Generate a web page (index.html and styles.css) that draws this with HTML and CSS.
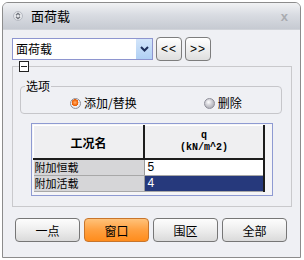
FILE: index.html
```html
<!DOCTYPE html>
<html>
<head>
<meta charset="utf-8">
<link rel="stylesheet" href="styles.css">
</head>
<body>
<div class="window">
  <div class="titlebar">
    <svg class="ticon" width="10" height="10" viewBox="0 0 10 10">
      <circle cx="5" cy="5" r="4.5" fill="#e4e6ea" stroke="#b4b8c0"/>
      <path d="M3 4.2 L5 2.4 L7 4.2 M3 5.8 L5 7.6 L7 5.8" fill="none" stroke="#6c7078" stroke-width="1.2"/>
    </svg>
    <span class="title">面荷载</span>
    <span class="close">x</span>
  </div>
  <div class="body">
    <div class="toprow">
      <div class="select">
        <span class="sel-text">面荷载</span>
        <span class="sel-btn">
          <svg width="9" height="6" viewBox="0 0 9 6"><path d="M1 1 L4.5 4.5 L8 1" fill="none" stroke="#1f2f5a" stroke-width="2"/></svg>
        </span>
      </div>
      <button class="nav">&lt;&lt;</button>
      <button class="nav">&gt;&gt;</button>
    </div>
    <fieldset class="outer">
      <legend class="collapse"><span class="minus"></span></legend>
      <fieldset class="options">
        <legend class="opt-label">选项</legend>
        <div class="radios">
          <label class="radio on"><span class="dot"></span>添加/替换</label>
          <label class="radio off"><span class="dot"></span>删除</label>
        </div>
      </fieldset>
      <div class="grid-wrap">
        <table class="grid">
          <tr class="head"><th class="c1">工况名</th><th class="c2"><span class="q">q<br>(kN/m^2)</span></th></tr>
          <tr><td class="name"><span class="cell">附加恒载</span></td><td class="val"><span class="cell">5</span></td></tr>
          <tr><td class="name"><span class="cell">附加活载</span></td><td class="val sel"><span class="cell">4</span></td></tr>
        </table>
      </div>
    </fieldset>
    <div class="actions">
      <button class="act">一点</button>
      <button class="act active">窗口</button>
      <button class="act">围区</button>
      <button class="act">全部</button>
    </div>
  </div>
</div>
</body>
</html>
```
FILE: styles.css
```css
html, body {
  margin: 0;
  padding: 0;
  background: #ffffff;
}
body {
  font-family: "Noto Sans CJK SC", "Liberation Sans", sans-serif;
  font-size: 12px;
  color: #000;
}
.window {
  margin: 2px 3px 2px 2px;
  height: 254px;
  border: 1px solid #8c8c8c;
  border-radius: 6px 6px 0 0;
  background: #eff0f4;
  display: flex;
  flex-direction: column;
  overflow: hidden;
}
.titlebar {
  height: 26px;
  flex: none;
  display: flex;
  align-items: center;
  padding: 0 0 0 10px;
  background: linear-gradient(#f1f2f4, #d9dce2 45%, #c6cad2 100%);
  border-bottom: 1px solid #d0d3d9;
}
.ticon { flex: none; }
.title {
  margin-left: 8px;
  font-size: 13px;
  line-height: 16px;
}
.close {
  margin-left: auto;
  margin-right: 12px;
  color: #a9abb0;
  font-family: "Liberation Sans", sans-serif;
  font-size: 13px;
  font-weight: bold;
}
.body {
  flex: 1;
  padding: 7px 8px 0 9px;
  display: flex;
  flex-direction: column;
}
.toprow {
  display: flex;
  align-items: center;
  height: 24px;
}
.select {
  width: 139px;
  height: 20px;
  border: 1px solid #8e95cf;
  background: #fff;
  display: flex;
  align-items: stretch;
}
.sel-text {
  flex: 1;
  padding-left: 3px;
  line-height: 20px;
  font-size: 12px;
}
.sel-btn {
  width: 16px;
  background: linear-gradient(#d3e5fa, #b0d0f4);
  display: flex;
  align-items: center;
  justify-content: center;
}
.nav {
  margin-left: 3px;
  width: 26px;
  height: 24px;
  padding: 0;
  border: 1px solid #7d7d7d;
  border-radius: 4px;
  background: linear-gradient(#ffffff, #ececec 60%, #dedede);
  font-family: "Liberation Sans", sans-serif;
  font-size: 12px;
  letter-spacing: 1px;
  color: #000;
}
.outer {
  margin: 0;
  width: 262px;
  border: 1px solid #c9c9cc;
  padding: 7px 9px 10px 7px;
}
.collapse {
  padding: 0;
  margin-left: -1px;
  height: 11px;
  line-height: 0;
}
.minus {
  display: block;
  box-sizing: border-box;
  width: 10px;
  height: 11px;
  border: 1px solid #222;
  background: #fff linear-gradient(#222, #222) no-repeat center / 6px 1px;
}
.options {
  margin: 0;
  border: 1px solid #c6c6ca;
  border-radius: 4px;
  padding: 3px 0 3px 4px;
}
.opt-label {
  padding: 0 1px;
  font-size: 12px;
  line-height: 14px;
}
.radios {
  display: flex;
  align-items: center;
  height: 14px;
  padding-left: 45px;
}
.radio {
  display: flex;
  align-items: center;
  gap: 3px;
  line-height: 14px;
}
.radio.off { margin-left: 67px; }
.dot {
  width: 11px;
  height: 11px;
  border-radius: 50%;
  box-sizing: border-box;
  border: 1px solid #8f8f9a;
}
.on .dot {
  background: radial-gradient(circle at 45% 40%, #ffb070 0, #f36a10 2.5px, #e85a00 3.2px, #f2f2f5 3.6px, #d8d8de 100%);
}
.off .dot {
  background: radial-gradient(circle at 40% 35%, #ffffff 0, #d0d0d6 40%, #9a9aa4 100%);
}
.grid-wrap {
  margin: 9px 9px 0 11px;
  height: 69px;
  border: 1px solid #8e9ad2;
  background: #f5f5f7;
  padding: 1px;
}
.grid {
  border-collapse: collapse;
  border-spacing: 0;
  table-layout: fixed;
  width: 232px;
}
.grid th, .grid td {
  padding: 0;
}
.head th {
  height: 32px;
  background: #efeff1;
  border-top: 1px solid #fff;
  border-bottom: 2px solid #1c1c1c;
  border-right: 2px solid #1c1c1c;
  font-weight: bold;
  font-size: 12px;
}
.c1 { width: 109px; border-left: 1px solid #fff; }
.q {
  display: inline-block;
  font-family: "Liberation Mono", monospace;
  font-size: 10px;
  line-height: 12px;
  font-weight: bold;
}
.grid td {
  height: 15px;
  border-bottom: 1px solid #a8a8a8;
}
.cell {
  display: block;
  height: 15px;
  line-height: 15px;
  font-size: 11px;
  white-space: nowrap;
}
.name {
  background: #d6d6d8;
  border-right: 1px solid #9a9a9a;
}
.grid td.name { padding-left: 1px; }
.grid td.val {
  background: #fff;
  padding-left: 3px;
  border-right: 2px solid #1c1c1c;
}
.val .cell {
  font-family: "Liberation Sans", sans-serif;
  font-size: 12px;
}
.grid td.val.sel {
  background: #26397c;
  color: #fff;
}
.actions {
  margin-top: 11px;
  padding-left: 3px;
  display: flex;
  gap: 4px;
}
.act {
  width: 65px;
  height: 24px;
  padding: 0;
  border: 1px solid #767676;
  border-radius: 4px;
  background: linear-gradient(#fdfdfd, #ececec 55%, #dadada);
  font-family: "Noto Sans CJK SC", sans-serif;
  font-size: 12px;
  color: #000;
}
.act.active {
  border-color: #c7752c;
  background: linear-gradient(#ffc27a, #ffa040 50%, #ff8c1c);
}
```
